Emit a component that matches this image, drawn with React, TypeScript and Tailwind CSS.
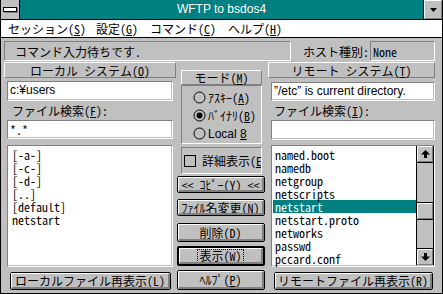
import React from "react";

const F = "font-['Noto_Sans_Mono_CJK_JP','Noto_Sans_CJK_JP',sans-serif]";
const P = "font-['Liberation_Sans','Noto_Sans_CJK_JP',sans-serif]";
const RAISED =
  "border border-t-white border-l-white border-r-[#808080] border-b-[#808080]";
const SUNKEN =
  "border border-t-[#808080] border-l-[#808080] border-r-white border-b-white";

function U({ children }: { children: React.ReactNode }) {
  return <span className="underline decoration-1 underline-offset-[1px]">{children}</span>;
}

function Field({ className = "", children }: { className?: string; children?: React.ReactNode }) {
  return (
    <div className={`${SUNKEN} shrink-0 ${className}`}>
      <div
        className={`h-full bg-white border-r border-b border-r-[#c0c0c0] border-b-[#c0c0c0] flex items-center pl-[2px] whitespace-nowrap overflow-hidden ${P}`}
      >
        {children}
      </div>
    </div>
  );
}

function Btn({
  className = "",
  children,
  def = false,
}: {
  className?: string;
  children: React.ReactNode;
  def?: boolean;
}) {
  return (
    <div
      className={`${def ? "border-2" : "border"} border-black rounded-[2px] bg-[#c0c0c0] shrink-0 ${className}`}
    >
      <div className="h-full border-t border-l border-r-2 border-b-2 border-t-white border-l-white border-r-[#808080] border-b-[#808080] flex items-center justify-center whitespace-nowrap overflow-hidden">
        {children}
      </div>
    </div>
  );
}

function Radio({ label, checked = false }: { label: React.ReactNode; checked?: boolean }) {
  return (
    <div className="h-[18px] flex items-center whitespace-nowrap">
      <svg width="13" height="13" viewBox="0 0 13 13" className="shrink-0">
        <circle cx="6.5" cy="6.5" r="5.5" fill="none" stroke="#000" strokeWidth="1" />
        {checked && <circle cx="6.5" cy="6.5" r="3" fill="#000" />}
      </svg>
      <span className="ml-[2px]">{label}</span>
    </div>
  );
}

function ArrowUp() {
  return (
    <svg width="9" height="8" viewBox="0 0 9 8">
      <polygon points="4.5,0 9,4.5 0,4.5" fill="#000" />
      <rect x="3" y="4" width="3" height="4" fill="#000" />
    </svg>
  );
}

function ArrowDown() {
  return (
    <svg width="9" height="8" viewBox="0 0 9 8">
      <rect x="3" y="0" width="3" height="4" fill="#000" />
      <polygon points="0,3.5 9,3.5 4.5,8" fill="#000" />
    </svg>
  );
}

const localItems = ["[-a-]", "[-c-]", "[-d-]", "[..]", "[default]", "netstart"];
const remoteItems = [
  "named.boot",
  "namedb",
  "netgroup",
  "netscripts",
  "netstart",
  "netstart.proto",
  "networks",
  "passwd",
  "pccard.conf",
];

export default function App() {
  return (
    <div
      className={`w-[443px] h-[294px] bg-[#c0c0c0] border-l border-r border-b border-black flex flex-col overflow-hidden text-black text-[12px] leading-[13px] ${F}`}
    >
      {/* Title bar */}
      <div className="h-[20px] shrink-0 flex bg-[#008080] border-b border-black">
        <div className="w-[19px] h-full bg-[#c0c0c0] border-r border-black flex items-center justify-center">
          <div className="w-[14px] h-[5px] bg-white border border-black shadow-[1px_1px_0_#808080]" />
        </div>
        <div className={`flex-1 flex items-center justify-center text-white text-[12px] ${P}`}>
          WFTP to bsdos4
        </div>
        <div className="w-[19px] h-full border-l border-black bg-[#c0c0c0]">
          <div className={`h-full ${RAISED} flex items-center justify-center`}>
            <svg width="7" height="4" viewBox="0 0 7 4">
              <polygon points="0,0 7,0 3.5,4" fill="#000" />
            </svg>
          </div>
        </div>
      </div>

      {/* Menu bar */}
      <div className="h-[18px] shrink-0 bg-white border-b border-black flex items-center pl-[7px] whitespace-nowrap">
        <div className="w-[88px]">
          セッション(<U>S</U>)
        </div>
        <div className="w-[54px]">
          設定(<U>G</U>)
        </div>
        <div className="w-[78px]">
          コマンド(<U>C</U>)
        </div>
        <div>
          ヘルプ(<U>H</U>)
        </div>
      </div>

      {/* Status row */}
      <div className="mt-[3px] h-[20px] shrink-0 flex items-center">
        <div className={`ml-[3px] w-[287px] h-full ${SUNKEN} flex items-center pl-[10px]`}>
          コマンド入力待ちです.
        </div>
        <div className="ml-[12px] whitespace-nowrap">ホスト種別:</div>
        <div className={`ml-[1px] w-[65px] h-full ${SUNKEN} flex items-center pl-[2px]`}>None</div>
      </div>

      {/* Main columns */}
      <div className="mt-[1px] flex flex-1 min-h-0">
        {/* Local */}
        <div className="ml-[3px] w-[172px] flex flex-col">
          <div className={`h-[16px] ${RAISED} flex items-center justify-center whitespace-nowrap`}>
            ローカル システム(<U>O</U>)
          </div>
          <Field className="mt-[3px] mx-[3px] h-[20px]">c:¥users</Field>
          <div className="h-[19px] flex items-center pl-[8px] whitespace-nowrap">
            ファイル検索(<U>F</U>):
          </div>
          <Field className="mx-[3px] h-[19px]">
            <span className={F}>*.*</span>
          </Field>
          <div className={`mt-[6px] mx-[3px] h-[122px] ${SUNKEN}`}>
            <div className="h-full bg-white border-r border-b border-r-[#c0c0c0] border-b-[#c0c0c0] pt-[2px] pl-[4px]">
              {localItems.map((t) => (
                <div key={t} className="h-[13px] leading-[13px] whitespace-nowrap">
                  {t}
                </div>
              ))}
            </div>
          </div>
          <Btn className="mt-[5px] ml-[6px] mr-[5px] h-[18px]">
            ローカルファイル再表示(<U>L</U>)
          </Btn>
        </div>

        {/* Middle */}
        <div className="ml-[1px] w-[88px] flex flex-col">
          <div className={`mt-[8px] ml-[4px] mr-[3px] h-[15px] ${RAISED} flex items-center justify-center whitespace-nowrap`}>
            モード(<U>M</U>)
          </div>
          <div className={`ml-[4px] mr-[3px] h-[59px] ${SUNKEN} pt-[2px] pl-[11px] flex flex-col`}>
            <Radio
              label={
                <>
                  ｱｽｷｰ(<U>A</U>)
                </>
              }
            />
            <Radio
              checked
              label={
                <>
                  ﾊﾞｲﾅﾘ(<U>B</U>)
                </>
              }
            />
            <Radio
              label={
                <span className={P}>
                  Local <U>8</U>
                </span>
              }
            />
          </div>
          <div className={`mt-[3px] ml-[4px] mr-[3px] h-[27px] ${SUNKEN} flex items-center pl-[2px] overflow-hidden whitespace-nowrap`}>
            <div className="w-[12px] h-[12px] border border-black shrink-0" />
            <span className="ml-[6px]">
              詳細表示(<U>E</U>)
            </span>
          </div>
          <Btn className="mt-[2px] h-[17px]">
            &lt;&lt; ｺﾋﾟｰ(<U>Y</U>) &lt;&lt;
          </Btn>
          <Btn className="mt-[6px] h-[17px]">
            ﾌｧｲﾙ名変更(<U>N</U>)
          </Btn>
          <Btn className="mt-[7px] h-[19px]">
            削除(<U>D</U>)
          </Btn>
          <Btn def className="mt-[4px] h-[20px]">
            <span className="border border-dotted border-black px-[1px] leading-[12px]">
              表示(<U>W</U>)
            </span>
          </Btn>
          <Btn className="mt-[4px] h-[20px]">
            ﾍﾙﾌﾟ(<U>P</U>)
          </Btn>
        </div>

        {/* Remote */}
        <div className="ml-[3px] w-[167px] flex flex-col">
          <div className={`h-[16px] ${RAISED} flex items-center justify-center whitespace-nowrap`}>
            リモート システム(<U>T</U>)
          </div>
          <Field className="mt-[4px] ml-[3px] h-[19px]">”/etc” is current directory.</Field>
          <div className="h-[19px] flex items-center pl-[6px] whitespace-nowrap">
            ファイル検索(<U>I</U>):
          </div>
          <Field className="ml-[3px] h-[20px]" />
          <div className={`mt-[5px] ml-[3px] h-[122px] ${SUNKEN}`}>
            <div className="h-full bg-white flex border-b border-b-[#c0c0c0]">
              <div className="flex-1 pt-[2px]">
                {remoteItems.map((t) => (
                  <div
                    key={t}
                    className={`h-[13px] leading-[13px] ml-[1px] pl-[2px] whitespace-nowrap ${
                      t === "netstart" ? "bg-[#008080] text-white" : ""
                    }`}
                  >
                    {t}
                  </div>
                ))}
              </div>
              <div className="w-[18px] border-l border-r border-black bg-[#c0c0c0] flex flex-col">
                <div className="h-[17px] border-b border-black">
                  <div className={`h-full ${RAISED} flex items-center justify-center`}>
                    <ArrowUp />
                  </div>
                </div>
                <div className="h-[39px]" />
                <div className="h-[18px] border-t border-b border-black">
                  <div className={`h-full ${RAISED}`} />
                </div>
                <div className="flex-1" />
                <div className="h-[17px] border-t border-black">
                  <div className={`h-full ${RAISED} flex items-center justify-center`}>
                    <ArrowDown />
                  </div>
                </div>
              </div>
            </div>
          </div>
          <Btn className="mt-[5px] ml-[6px] w-[159px] h-[18px]">
            リモートファイル再表示(<U>R</U>)
          </Btn>
        </div>
      </div>
    </div>
  );
}
